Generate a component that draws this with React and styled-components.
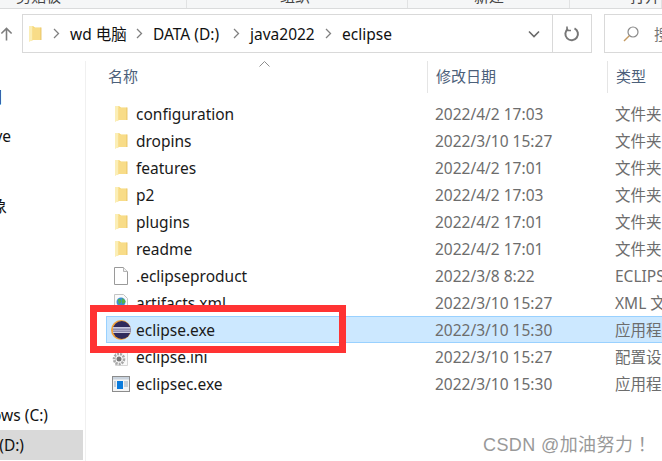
import React from 'react'
import styled, { createGlobalStyle } from 'styled-components'

const Global = createGlobalStyle`
html, body { margin: 0; padding: 0; background: #fff; }
* { box-sizing: border-box; }
`

const FONT = `"Noto Sans", "Noto Sans CJK SC", sans-serif`

const files = [
  { name: 'configuration', date: '2022/4/2 17:03', type: '文件夹', icon: 'folder' },
  { name: 'dropins', date: '2022/3/10 15:27', type: '文件夹', icon: 'folder' },
  { name: 'features', date: '2022/4/2 17:01', type: '文件夹', icon: 'folder' },
  { name: 'p2', date: '2022/4/2 17:03', type: '文件夹', icon: 'folder' },
  { name: 'plugins', date: '2022/4/2 17:01', type: '文件夹', icon: 'folder' },
  { name: 'readme', date: '2022/4/2 17:01', type: '文件夹', icon: 'folder' },
  { name: '.eclipseproduct', date: '2022/3/8 8:22', type: 'ECLIPSEPRODUCT', icon: 'file' },
  { name: 'artifacts.xml', date: '2022/3/10 15:27', type: 'XML 文档', icon: 'xml' },
  { name: 'eclipse.exe', date: '2022/3/10 15:30', type: '应用程序', icon: 'eclipse', selected: true },
  { name: 'eclipse.ini', date: '2022/3/10 15:27', type: '配置设置', icon: 'ini' },
  { name: 'eclipsec.exe', date: '2022/3/10 15:30', type: '应用程序', icon: 'exe' },
]

const sideItems = [
  { label: '时间', right: 81, top: 20 },
  { label: 'OneDrive', right: 72, top: 10 },
  { label: '3D 对象', right: 76, top: 39 },
  { label: 'Windows (C:)', right: 35, top: 180 },
  { label: 'DATA (D:)', right: 59, top: 0, active: true },
]

const FolderIcon = () => (
  <svg width="14" height="17" viewBox="0 0 14 17">
    <path d="M1 1h4l2 1.500h6v12.500H5L1 16.500z" fill="#f6d775" />
    <path d="M1 1h3.500v14.500L1 16.500z" fill="#fbeeb6" />
    <path d="M4.500 3h8.500v12H4.500z" fill="#f8dc88" />
    <path d="M13 2.500V15" stroke="#e2bb55" strokeWidth="0.800" />
  </svg>
)

const FileIcon = () => (
  <svg width="16" height="20" viewBox="0 0 16 20">
    <path d="M1.500 1.500h9l4 4v13h-13z" fill="#fff" stroke="#9a9a9a" />
    <path d="M10.500 1.500v4h4" fill="#f1f1f1" stroke="#b5b5b5" />
  </svg>
)

const XmlIcon = () => (
  <svg width="18" height="20" viewBox="0 0 18 20">
    <path d="M2.500 1.500h9l4 4v13h-13z" fill="#fafafa" stroke="#c4c4c4" />
    <circle cx="9" cy="9" r="4.500" fill="#3d8fd4" />
    <path d="M6 7c2-1 3 0 3 1.500s-2 1-2 2.500M10 5.500c1 1.500 3 1 3 3s-2 1-3 2" fill="#55b04a" stroke="#55b04a" />
  </svg>
)

const EclipseIcon = () => (
  <svg width="20" height="20" viewBox="0 0 20 20">
    <circle cx="10" cy="10" r="10" fill="#f0a23c" />
    <circle cx="10.800" cy="10" r="9" fill="#2f2a5c" />
    <path d="M1.900 7h17.800v6H1.900z" fill="#c9c9de" />
    <path d="M1.900 8.700h17.800v.7H1.900zM1.900 10.700h17.800v.7H1.900z" fill="#55507f" />
    <path d="M1 7h1v6H1z" fill="#f0a23c" />
  </svg>
)

const GearIcon = () => (
  <svg width="18" height="20" viewBox="0 0 18 20">
    <path d="M3.500 1.500h8l4 4v13h-12z" fill="#fafafa" stroke="#d6d6d6" />
    <circle cx="7" cy="12" r="5" fill="none" stroke="#a8a8a8" strokeWidth="2.600" strokeDasharray="2 1" />
    <circle cx="7" cy="12" r="2.500" fill="#777" />
  </svg>
)

const ExeIcon = () => (
  <svg width="18" height="16" viewBox="0 0 18 16">
    <rect x="0.500" y="0.500" width="17" height="15" fill="#f4f4f4" stroke="#8c8c8c" />
    <path d="M1 1h16v2.500H1z" fill="#c9d3de" />
    <rect x="5" y="5" width="6" height="8" fill="#0b7bdc" />
    <path d="M12 6h4M12 8h4M12 10h4M2 6h2M2 8h2M2 10h2" stroke="#9ab" />
  </svg>
)

const icons = {
  folder: <FolderIcon />,
  file: <FileIcon />,
  xml: <XmlIcon />,
  eclipse: <EclipseIcon />,
  ini: <GearIcon />,
  exe: <ExeIcon />,
}

const Chevron = () => (
  <ChevronBox>
    <svg width="7" height="11" viewBox="0 0 7 11">
      <path d="M1 1l4.500 4.500L1 10" fill="none" stroke="#808080" strokeWidth="1.300" />
    </svg>
  </ChevronBox>
)

export default function App() {
  return (
    <Page>
      <Global />
      <Ribbon>
        <RibbonGroup $width={187} $pad={16}>剪贴板</RibbonGroup>
        <RibbonGroup $width={221} $pad={93}>组织</RibbonGroup>
        <RibbonGroup $width={162} $pad={66}>新建</RibbonGroup>
        <RibbonGroup $width={92} $pad={60}>打开</RibbonGroup>
      </Ribbon>

      <AddressRow>
        <UpButton>
          <svg width="14" height="16" viewBox="0 0 14 16">
            <path d="M7 15V2M1.500 7.500L7 2l5.500 5.500" fill="none" stroke="#7d7d7d" strokeWidth="1.700" />
          </svg>
        </UpButton>
        <AddressBar>
          <CrumbFolder><FolderIcon /></CrumbFolder>
          <Chevron />
          <Crumb $width={56}>wd 电脑</Crumb>
          <Chevron />
          <Crumb $width={70}>DATA (D:)</Crumb>
          <Chevron />
          <Crumb $width={65}>java2022</Crumb>
          <Chevron />
          <Crumb>eclipse</Crumb>
          <Dropdown>
            <svg width="12" height="8" viewBox="0 0 12 8">
              <path d="M1 1.500l5 5 5-5" fill="none" stroke="#6a6a6a" strokeWidth="1.600" />
            </svg>
          </Dropdown>
          <Refresh>
            <svg width="16" height="16" viewBox="0 0 16 16">
              <path d="M10.500 2.300A6.300 6.300 0 1 1 4 2.800" fill="none" stroke="#777" strokeWidth="2" />
              <path d="M3 .500v4h4" fill="none" stroke="#777" strokeWidth="1.600" />
            </svg>
          </Refresh>
        </AddressBar>
        <SearchBox>
          <svg width="18" height="18" viewBox="0 0 18 18">
            <circle cx="11" cy="7" r="5" fill="none" stroke="#8a8a8a" strokeWidth="1.200" />
            <path d="M7.300 10.700L2 16" stroke="#c49a62" strokeWidth="1.400" />
          </svg>
          <SearchText>搜索</SearchText>
        </SearchBox>
      </AddressRow>

      <Body>
        <Sidebar>
          <SideScroll>
            {sideItems.map((item) => (
              <SideItem key={item.label} $right={item.right} $top={item.top} $active={item.active}>
                {item.label}
              </SideItem>
            ))}
          </SideScroll>
        </Sidebar>
        <Files>
          <HeaderRow>
            <SortCaret>
              <svg width="11" height="6" viewBox="0 0 11 6">
                <path d="M.500 5.500l5-5 5 5" fill="none" stroke="#8d8d8d" />
              </svg>
            </SortCaret>
            <HeadCell $width={327}>名称</HeadCell>
            <HeadCell $width={180}>修改日期</HeadCell>
            <HeadCell $width={54} $last>类型</HeadCell>
          </HeaderRow>
          <Rows>
            {files.map((f) => (
              <Row key={f.name} $selected={f.selected}>
                <NameCell>
                  <IconSlot>{icons[f.icon]}</IconSlot>
                  <Name>{f.name}</Name>
                </NameCell>
                <DateCell>{f.date}</DateCell>
                <TypeCell>{f.type}</TypeCell>
              </Row>
            ))}
          </Rows>
        </Files>
      </Body>

      <RedBox />
      <Watermark>CSDN @加油努力！</Watermark>
    </Page>
  )
}

const Page = styled.div`
position: relative;
width: 662px;
height: 461px;
overflow: hidden;
background: #fff;
font-family: ${FONT};
`
const Ribbon = styled.div`
display: flex;
height: 9px;
overflow: hidden;
background: #f5f6f7;
border-bottom: 1px solid #dadbdc;
`
const RibbonGroup = styled.div`
display: flex;
align-items: flex-end;
flex: none;
width: ${(p) => p.$width}px;
height: 8px;
padding: 0 0 4px ${(p) => p.$pad}px;
border-right: 1px solid #e1e2e3;
font-size: 15px;
line-height: 15px;
color: #444;
`
const AddressRow = styled.div`
display: flex;
align-items: stretch;
height: 39px;
margin-top: 5px;
`
const UpButton = styled.div`
flex: none;
display: flex;
align-items: center;
justify-content: center;
width: 22px;
padding-right: 9px;
`
const AddressBar = styled.div`
flex: none;
display: flex;
align-items: center;
width: 570px;
border: 1px solid #d9d9d9;
padding-left: 5px;
font-size: 15.5px;
color: #111;
`
const CrumbFolder = styled.div`
flex: none;
display: flex;
width: 15px;
`
const ChevronBox = styled.div`
flex: none;
display: flex;
justify-content: center;
width: 27px;
`
const Crumb = styled.div`
flex: none;
width: ${(p) => (p.$width ? `${p.$width}px` : 'auto')};
white-space: nowrap;
`
const Dropdown = styled.div`
flex: none;
display: flex;
align-items: center;
justify-content: center;
margin-left: auto;
width: 36px;
height: 100%;
`
const Refresh = styled.div`
flex: none;
display: flex;
align-items: center;
justify-content: center;
width: 39px;
height: 100%;
border-left: 1px solid #d9d9d9;
`
const SearchBox = styled.div`
flex: none;
display: flex;
align-items: center;
gap: 14px;
width: 90px;
margin-left: 12px;
padding-left: 17px;
border: 1px solid #d9d9d9;
border-right: none;
svg { flex: none; }
`
const SearchText = styled.span`
font-size: 15px;
color: #777;
white-space: nowrap;
`
const Body = styled.div`
display: flex;
height: 408px;
margin-top: 8px;
`
const Sidebar = styled.div`
flex: none;
width: 86px;
padding-right: 2px;
border-right: 1px solid #f0f0f0;
overflow: hidden;
`
const SideScroll = styled.div`
display: flex;
flex-direction: column;
`
const SideItem = styled.div`
flex: none;
display: flex;
justify-content: flex-end;
align-items: center;
height: 30px;
margin-top: ${(p) => p.$top}px;
padding-right: ${(p) => p.$right}px;
white-space: nowrap;
font-size: 15.5px;
color: #111;
background: ${(p) => (p.$active ? '#d9d9d9' : 'transparent')};
`
const Files = styled.div`
flex: 1;
min-width: 0;
padding-left: 15px;
`
const HeaderRow = styled.div`
position: relative;
display: flex;
height: 32px;
`
const SortCaret = styled.div`
position: absolute;
left: 158px;
top: 0;
line-height: 0;
`
const HeadCell = styled.div`
flex: none;
display: flex;
align-items: center;
width: ${(p) => p.$width}px;
padding-left: 8px;
padding-bottom: 3px;
border-right: ${(p) => (p.$last ? 'none' : '1px solid #e5e5e5')};
font-size: 15px;
color: #4c607a;
&:nth-of-type(2) { padding-left: 7px; }
`
const Rows = styled.div`
display: flex;
flex-direction: column;
margin-top: 7px;
margin-left: 5px;
`
const Row = styled.div`
display: flex;
align-items: center;
height: 27px;
margin-right: -20px;
background: ${(p) => (p.$selected ? '#cce8ff' : 'transparent')};
outline: ${(p) => (p.$selected ? '1px solid #99d1ff' : 'none')};
outline-offset: -1px;
font-size: 15.5px;
`
const NameCell = styled.div`
flex: none;
display: flex;
align-items: center;
width: 321px;
padding-left: 3px;
`
const IconSlot = styled.div`
flex: none;
display: flex;
justify-content: center;
width: 24px;
`
const Name = styled.span`
margin-left: 3px;
color: #1a1a1a;
white-space: nowrap;
`
const DateCell = styled.div`
flex: none;
width: 180px;
padding-left: 8px;
color: #6d6d6d;
white-space: nowrap;
`
const TypeCell = styled.div`
padding-left: 8px;
color: #6d6d6d;
white-space: nowrap;
`
const RedBox = styled.div`
position: absolute;
left: 90px;
top: 305px;
width: 256px;
height: 48px;
border: 7px solid #ff3333;
`
const Watermark = styled.div`
position: absolute;
left: 483px;
top: 430px;
font-family: "Liberation Sans", "Noto Sans CJK TC", sans-serif;
font-size: 18px;
letter-spacing: 0.4px;
color: #999;
white-space: nowrap;
`
